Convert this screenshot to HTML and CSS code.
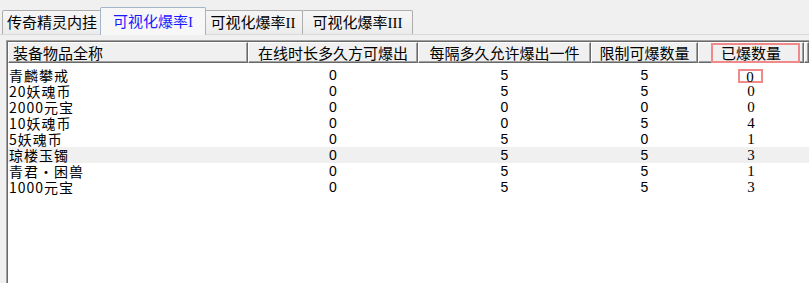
FILE: index.html
```html
<!DOCTYPE html>
<html lang="zh-CN">
<head>
  <meta charset="UTF-8">
  <title>可视化爆率</title>
  <link rel="stylesheet" href="styles.css">
</head>
<body>
  <div id="window">
    <div class="tabs">
      <div class="tab t1">传奇精灵内挂</div>
      <div class="tab t2 active">可视化爆率I</div>
      <div class="tab t3">可视化爆率II</div>
      <div class="tab t4">可视化爆率III</div>
    </div>

    <div class="panel">
      <div class="list">
        <div class="head">
          <div class="hcell first">装备物品全称</div>
          <div class="hcell">在线时长多久方可爆出</div>
          <div class="hcell">每隔多久允许爆出一件</div>
          <div class="hcell">限制可爆数量</div>
          <div class="hcell marked">已爆数量<span class="mark"></span></div>
          <div class="hcell rest"></div>
        </div>

        <div class="rows">
          <div class="row">
            <div class="cell name">青麟攀戒</div>
            <div class="cell">0</div>
            <div class="cell">5</div>
            <div class="cell">5</div>
            <div class="cell done"><span class="boxed">0</span></div>
          </div>
          <div class="row">
            <div class="cell name">20妖魂币</div>
            <div class="cell">0</div>
            <div class="cell">5</div>
            <div class="cell">5</div>
            <div class="cell done">0</div>
          </div>
          <div class="row">
            <div class="cell name">2000元宝</div>
            <div class="cell">0</div>
            <div class="cell">0</div>
            <div class="cell">0</div>
            <div class="cell done">0</div>
          </div>
          <div class="row">
            <div class="cell name">10妖魂币</div>
            <div class="cell">0</div>
            <div class="cell">0</div>
            <div class="cell">5</div>
            <div class="cell done">4</div>
          </div>
          <div class="row">
            <div class="cell name">5妖魂币</div>
            <div class="cell">0</div>
            <div class="cell">5</div>
            <div class="cell">0</div>
            <div class="cell done">1</div>
          </div>
          <div class="row hover">
            <div class="cell name">琼楼玉镯</div>
            <div class="cell">0</div>
            <div class="cell">5</div>
            <div class="cell">5</div>
            <div class="cell done">3</div>
          </div>
          <div class="row">
            <div class="cell name">青君・困兽</div>
            <div class="cell">0</div>
            <div class="cell">5</div>
            <div class="cell">5</div>
            <div class="cell done">1</div>
          </div>
          <div class="row">
            <div class="cell name">1000元宝</div>
            <div class="cell">0</div>
            <div class="cell">5</div>
            <div class="cell">5</div>
            <div class="cell done">3</div>
          </div>
        </div>
      </div>
    </div>
  </div>
</body>
</html>
```

FILE: styles.css
```css
body {
  margin: 0;
  padding: 0;
  background-color: #f0f0f0;
  font-family: "Noto Sans CJK SC", "Liberation Sans", sans-serif;
  color: #000;
}

#window {
  width: 809px;
  height: 283px;
  overflow: hidden;
}

/* tab strip */
.tabs {
  display: flex;
  align-items: flex-end;
  height: 34px;
  padding-left: 2px;
  border-bottom: 1px solid #d9d9d9;
}

.tab {
  box-sizing: border-box;
  height: 24px;
  font-family: "Liberation Serif", "Noto Sans CJK SC", serif;
  font-size: 15px;
  line-height: 24px;
  text-align: center;
  white-space: nowrap;
  border: 1px solid #adadad;
  border-bottom: none;
  border-radius: 2px 2px 0 0;
  background: linear-gradient(#f6f6f6, #ececec);
}

.tab + .tab {
  margin-left: -1px;
}

.t1 { width: 100px; }
.t2 { width: 106px; }
.t3 { width: 100px; }
.t4 { width: 111px; }

.tab.active {
  position: relative;
  z-index: 1;
  height: 28px;
  margin: 0 -2px -1px -2px;
  padding-top: 2px;
  color: #1a1aff;
  border-color: #a3b6c8;
  background: #f7f7f7;
}

/* list view */
.panel {
  padding: 5px 0 0 6px;
}

.list {
  height: 260px;
  background-color: #fff;
  border-left: 1px solid #a0a0a0;
  border-top: 1px solid #a0a0a0;
  box-shadow: inset 1px 1px 0 #696969;
  padding: 1px 0 0 1px;
}

.head {
  display: grid;
  grid-template-columns: 240px 170px 173px 107px 106px 1fr;
  height: 21px;
}

.hcell {
  box-sizing: border-box;
  position: relative;
  font-size: 15px;
  line-height: 19px;
  text-align: center;
  white-space: nowrap;
  background-color: #f0f0f0;
  border: 1px solid;
  border-color: #fff #696969 #696969 #fff;
  box-shadow: inset -1px -1px 0 #a0a0a0;
}

.hcell.first {
  text-align: left;
  padding-left: 4px;
}

.rows {
  padding-top: 4px;
}

.row {
  display: grid;
  grid-template-columns: 240px 170px 173px 107px 106px;
  height: 16px;
  line-height: 16px;
}

.row.hover {
  background-color: #f0f0f0;
}

.cell {
  text-align: center;
  white-space: nowrap;
  font-family: "Liberation Sans", "Noto Sans CJK SC", sans-serif;
  font-size: 14px;
}

.cell.name {
  text-align: left;
  padding-left: 1px;
  font-family: "Noto Sans CJK SC", sans-serif;
  font-size: 14px;
  letter-spacing: 1px;
}

.cell.done {
  font-family: "Liberation Serif", serif;
  font-size: 15px;
}

/* red annotation boxes */
.mark {
  position: absolute;
  left: 12px;
  top: 0;
  width: 89px;
  height: 20px;
  box-sizing: border-box;
  border: 2px solid #f08a8a;
}

.boxed {
  display: inline-block;
  box-sizing: border-box;
  width: 25px;
  height: 14px;
  line-height: 12px;
  margin-top: 2px;
  margin-left: -2px;
  border: 2px solid #f08a8a;
}
```
